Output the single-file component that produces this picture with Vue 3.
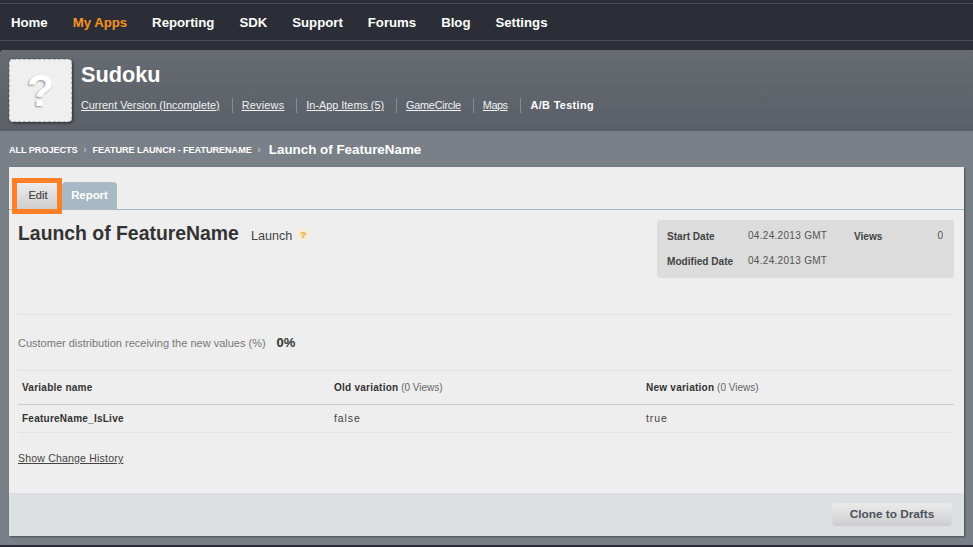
<script setup>
const nav = ['Home', 'My Apps', 'Reporting', 'SDK', 'Support', 'Forums', 'Blog', 'Settings']
const links = ['Current Version (Incomplete)', 'Reviews', 'In-App Items (5)', 'GameCircle', 'Maps']
</script>

<template>
  <div class="page">
    <nav class="topnav">
      <a v-for="n in nav" :key="n" class="navitem" :class="{ active: n === 'My Apps' }">{{ n }}</a>
    </nav>
    <main class="shell">
      <header class="apphead">
        <div class="appicon"><span class="q">?</span></div>
        <div class="appinfo">
          <h1 class="appname">Sudoku</h1>
          <div class="applinks">
            <a v-for="l in links" :key="l" class="applink"><u>{{ l }}</u></a>
            <b class="applink current">A/B Testing</b>
          </div>
        </div>
      </header>
      <div class="crumbs">
        <span class="crumb">ALL PROJECTS</span>
        <i class="tri"></i>
        <span class="crumb">FEATURE LAUNCH - FEATURENAME</span>
        <i class="tri"></i>
        <span class="crumbnow">Launch of FeatureName</span>
      </div>
      <section class="card">
        <div class="tabs">
          <div class="tab edit">Edit</div>
          <div class="tab report">Report</div>
        </div>
        <div class="body">
          <div class="titlerow">
            <div class="titleleft">
              <h2 class="title">Launch of FeatureName</h2>
              <span class="kind">Launch</span>
              <span class="help">?</span>
            </div>
            <div class="stats">
              <span class="sl">Start Date</span><span class="sv">04.24.2013 GMT</span><span class="sl views">Views</span><span class="sv zero">0</span>
              <span class="sl">Modified Date</span><span class="sv">04.24.2013 GMT</span>
            </div>
          </div>
          <div class="dist">
            <span>Customer distribution receiving the new values (%)</span><strong>0%</strong>
          </div>
          <div class="row head">
            <div class="cell"><b>Variable name</b></div>
            <div class="cell"><b>Old variation</b> (0 Views)</div>
            <div class="cell"><b>New variation</b> (0 Views)</div>
          </div>
          <div class="row data">
            <div class="cell"><b>FeatureName_IsLive</b></div>
            <div class="cell">false</div>
            <div class="cell">true</div>
          </div>
          <a class="history">Show Change History</a>
        </div>
        <footer class="foot">
          <button class="clone" type="button">Clone to Drafts</button>
        </footer>
      </section>
    </main>
  </div>
</template>

<style>
html, body { margin: 0; background: #2c2f38; }
</style>

<style scoped>
.page {
  width: 973px;
  height: 547px;
  overflow: hidden;
  background: #2b2e37;
  font-family: "Liberation Sans", Arial, sans-serif;
  padding-top: 3px;
  box-sizing: border-box;
}
.topnav {
  height: 38px;
  box-sizing: border-box;
  border-top: 1px solid #4a4d55;
  border-bottom: 1px solid #4a4d55;
  display: flex;
  align-items: center;
  padding-left: 11px;
  gap: 25px;
  font-size: 13.2px;
  font-weight: 700;
  color: #fff;
}
.navitem { display: block; line-height: 36px; padding-top: 1px; }
.active { color: #f7931e; }
.shell {
  margin-top: 9px;
  height: 495px;
  background: #7a8087;
  border-radius: 4px 0 0 0;
  overflow: hidden;
}
.apphead {
  height: 81px;
  box-sizing: border-box;
  background: linear-gradient(#666b72, #5b6068);
  display: flex;
  padding: 9px 0 0 9px;
}
.appicon {
  width: 63px;
  height: 63px;
  box-sizing: border-box;
  background: #efefef;
  border: 1px dashed #b5b5b5;
  border-radius: 4px;
  box-shadow: 1px 1px 3px rgba(0, 0, 0, .55);
  display: flex;
  align-items: center;
  justify-content: center;
}
.q {
  font-size: 45px;
  font-weight: 700;
  line-height: 1;
  color: #fff;
  text-shadow: -1px 1px 2px rgba(0, 0, 0, .4);
}
.appinfo { margin-left: 9px; }
.appname {
  margin: 3px 0 0;
  font-size: 21.7px;
  line-height: 26px;
  font-weight: 700;
  color: #fff;
}
.applinks {
  display: flex;
  align-items: center;
  margin-top: 10px;
  font-size: 10.85px;
  color: #eef0f2;
}
.applink {
  display: block;
  line-height: 15px;
  padding-right: 12px;
  margin-right: 9px;
  border-right: 1px solid #868b91;
}
.applink:nth-child(2) { letter-spacing: .25px; }
.applink:nth-child(4) { letter-spacing: -.25px; }
.applink:nth-child(5) { letter-spacing: -.45px; }
.current {
  border: 0;
  color: #fff;
  margin: 0 0 0 1px;
  letter-spacing: .35px;
}
.crumbs {
  height: 36px;
  display: flex;
  align-items: center;
  padding-left: 9px;
  color: #fff;
  font-weight: 700;
}
.crumb { font-size: 9.2px; letter-spacing: -.1px; padding-top: 1px; }
.tri {
  width: 0;
  height: 0;
  border-left: 3px solid #a7abb0;
  border-top: 3px solid transparent;
  border-bottom: 3px solid transparent;
  margin: 1px 6px 0;
}
.crumbnow { font-size: 13.4px; margin-left: 2px; }
.card {
  margin-left: 9px;
  width: 955px;
  height: 369px;
  background: #eeeeee;
  box-shadow: 1px 1px 2px rgba(0, 0, 0, .4);
  display: flex;
  flex-direction: column;
}
.tabs {
  height: 43px;
  box-sizing: border-box;
  border-bottom: 1px solid #a6b9c4;
  display: flex;
  align-items: flex-end;
  padding-left: 8px;
  position: relative;
}
.tab {
  font-size: 11.4px;
  font-weight: 700;
  text-align: center;
  height: 27px;
  line-height: 27px;
  box-sizing: border-box;
  border-radius: 4px 4px 0 0;
}
.edit {
  width: 40px;
  color: #444;
  font-size: 11px;
  font-weight: 400;
  -webkit-text-stroke: .2px #444;
  background: linear-gradient(#ececec, #cfcfcf);
  outline: 5px solid #ff7f27;
  outline-offset: 0;
  border-radius: 0;
  height: 26px;
  line-height: 25px;
  padding-left: 2px;
  position: relative;
  z-index: 1;
}
.report {
  width: 55px;
  margin-left: 5px;
  background: #a6b9c4;
  color: #fff;
}
.body { flex: 1; padding: 0 10px 0 9px; color: #555; font-size: 10px; }
.titlerow { height: 104px; display: flex; justify-content: space-between; border-bottom: 1px solid #e2e2e2; box-sizing: content-box; }
.titleleft { display: flex; align-items: baseline; padding-top: 11px; height: fit-content; }
.title { margin: 0; font-size: 19.4px; line-height: 24px; font-weight: 700; color: #333; }
.kind { margin-left: 12px; font-size: 12.6px; color: #444; }
.help {
  width: 12px;
  height: 12px;
  margin-left: 5px;
  border-radius: 50%;
  background: #f7e6c6;
  box-shadow: inset 0 0 0 2px #faeed8;
  color: #f0a830;
  font-size: 9.5px;
  font-weight: 700;
  line-height: 12px;
  text-align: center;
  position: relative;
  top: -2px;
}
.stats {
  margin-top: 10px;
  width: 297px;
  height: 58px;
  box-sizing: border-box;
  background: #dcdcdc;
  border-radius: 3px;
  padding: 9px 11px 0 10px;
  display: grid;
  grid-template-columns: 81px 106px 60px 1fr;
  grid-auto-rows: 25px;
  font-size: 10px;
  color: #555;
}
.sl { font-weight: 700; color: #444; font-size: 10.1px; line-height: 15px; }
.sv { line-height: 13px; letter-spacing: .3px; }
.zero { text-align: right; letter-spacing: 0; }
.dist { height: 55px; display: flex; align-items: center; border-bottom: 1px solid #e2e2e2; font-size: 11px; color: #777; }
.dist strong { margin-left: 11px; font-size: 13px; color: #333; }
.row { display: grid; grid-template-columns: 312px 312px 1fr; align-items: center; color: #666; font-size: 10px; }
.row b { color: #333; font-size: 10px; letter-spacing: .25px; }
.cell { padding-left: 4px; }
.head { height: 34px; box-sizing: border-box; border-bottom: 1px solid #cdcdcd; }
.data { height: 28px; box-sizing: border-box; border-bottom: 1px solid #e2e2e2; padding-bottom: 2px; font-size: 10.5px; letter-spacing: .9px; color: #444; }
.history { display: inline-block; margin-top: 19px; font-size: 10.5px; color: #444; text-decoration: underline; letter-spacing: .2px; }
.foot {
  height: 43px;
  background: #dce0e3;
  display: flex;
  justify-content: flex-end;
  align-items: center;
  padding: 0 12px 0 0;
}
.clone {
  width: 120px;
  height: 23px;
  border: 0;
  border-radius: 4px;
  background: linear-gradient(#ebebeb, #cdcdcd);
  color: #4a5260;
  font: 700 11.8px "Liberation Sans", Arial, sans-serif;
  padding: 0 0 2px;
}
</style>
